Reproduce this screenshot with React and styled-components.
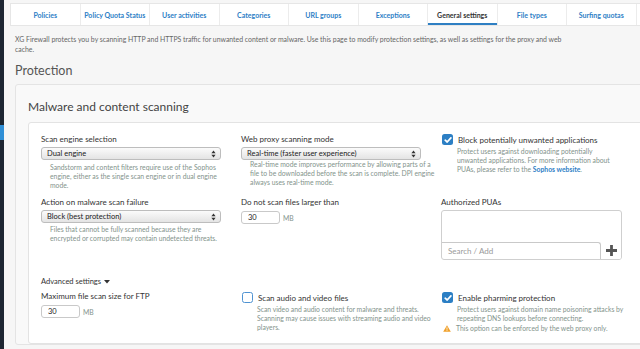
import React from 'react';
import styled, { createGlobalStyle } from 'styled-components';

const GlobalStyle = createGlobalStyle`
  html, body {
    margin: 0;
    padding: 0;
    overflow: hidden;
    background: #f6f6f6;
  }
  body {
    font-family: Lato, "Liberation Sans", Arial, sans-serif;
    color: #333;
  }
`;

const tabs = [
  'Policies',
  'Policy Quota Status',
  'User activities',
  'Categories',
  'URL groups',
  'Exceptions',
  'General settings',
  'File types',
  'Surfing quotas',
];

function Arrows() {
  return (
    <svg width="5" height="8" viewBox="0 0 5 8">
      <path d="M2.5 0.5 L4.6 3.2 H0.4 Z" fill="#333" />
      <path d="M2.5 7.5 L4.6 4.8 H0.4 Z" fill="#333" />
    </svg>
  );
}

function Check({ checked }) {
  return (
    <CheckBox $checked={checked}>
      {checked && (
        <svg width="8" height="8" viewBox="0 0 8 8">
          <path d="M1.2 4.2 L3.2 6 L6.9 1.9" stroke="#fff" strokeWidth="1.7" fill="none" strokeLinecap="round" strokeLinejoin="round" />
        </svg>
      )}
    </CheckBox>
  );
}

function SelectField({ value }) {
  return (
    <Select>
      <span>{value}</span>
      <Arrows />
    </Select>
  );
}

function App() {
  return (
    <>
      <GlobalStyle />
      <Shell>
        <Sidebar>
          <SideMarker />
        </Sidebar>
        <Main>
          <TabBar>
            {tabs.map((t) => (
              <Tab key={t} $active={t === 'General settings'}>{t}</Tab>
            ))}
          </TabBar>
          <Intro>
            XG Firewall protects you by scanning HTTP and HTTPS traffic for unwanted content or malware. Use this page to modify protection settings, as well as settings for the proxy and web cache.
          </Intro>
          <PageTitle>Protection</PageTitle>
          <Card>
            <CardTitle>Malware and content scanning</CardTitle>
            <Panel>
              <Grid>
                <Field>
                  <Label>Scan engine selection</Label>
                  <SelectField value="Dual engine" />
                  <Help $gap={3} $width={172}>
                    Sandstorm and content filters require use of the Sophos engine, either as the single scan engine or in dual engine mode.
                  </Help>
                </Field>
                <Field>
                  <Label>Web proxy scanning mode</Label>
                  <SelectField value="Real-time (faster user experience)" />
                  <Help $gap={0} $width={188}>
                    Real-time mode improves performance by allowing parts of a file to be downloaded before the scan is complete. DPI engine always uses real-time mode.
                  </Help>
                </Field>
                <Field>
                  <CheckRow>
                    <Check checked />
                    <Label>Block potentially unwanted applications</Label>
                  </CheckRow>
                  <CheckHelp $width={158}>
                    Protect users against downloading potentially unwanted applications. For more information about PUAs, please refer to the <Link>Sophos website</Link>.
                  </CheckHelp>
                </Field>

                <Field>
                  <Label>Action on malware scan failure</Label>
                  <SelectField value="Block (best protection)" />
                  <Help $gap={2} $width={172}>
                    Files that cannot be fully scanned because they are encrypted or corrupted may contain undetected threats.
                  </Help>
                </Field>
                <Field>
                  <Label>Do not scan files larger than</Label>
                  <InputRow $gap={4}>
                    <SmallInput>30</SmallInput>
                    <Unit>MB</Unit>
                  </InputRow>
                </Field>
                <Field>
                  <Label>Authorized PUAs</Label>
                  <ListBox>
                    <SearchRow>
                      <Search>Search / Add</Search>
                      <AddButton>
                        <svg width="11" height="11" viewBox="0 0 11 11">
                          <path d="M4.1 0 H6.9 V4.1 H11 V6.9 H6.9 V11 H4.1 V6.9 H0 V4.1 H4.1 Z" fill="#555" />
                        </svg>
                      </AddButton>
                    </SearchRow>
                  </ListBox>
                </Field>

                <Advanced>
                  Advanced settings
                  <svg width="6" height="4" viewBox="0 0 6 4">
                    <path d="M0 0 H6 L3 3.6 Z" fill="#333" />
                  </svg>
                </Advanced>

                <Field>
                  <Label $top={1}>Maximum file scan size for FTP</Label>
                  <InputRow $gap={4}>
                    <SmallInput>30</SmallInput>
                    <Unit>MB</Unit>
                  </InputRow>
                </Field>
                <Field>
                  <CheckRow $top={2}>
                    <Check />
                    <Label>Scan audio and video files</Label>
                  </CheckRow>
                  <CheckHelp $width={186}>
                    Scan video and audio content for malware and threats. Scanning may cause issues with streaming audio and video players.
                  </CheckHelp>
                </Field>
                <Field>
                  <CheckRow $top={2}>
                    <Check checked />
                    <Label>Enable pharming protection</Label>
                  </CheckRow>
                  <CheckHelp $width={180}>
                    Protect users against domain name poisoning attacks by repeating DNS lookups before connecting.
                    <Warning>
                      <svg width="8" height="7" viewBox="0 0 8 7">
                        <path d="M4 0.2 L7.8 6.8 H0.2 Z" fill="#f0a02a" />
                        <rect x="3.6" y="2.3" width="0.8" height="2.4" fill="#fff" />
                        <rect x="3.6" y="5.2" width="0.8" height="0.8" fill="#fff" />
                      </svg>
                      This option can be enforced by the web proxy only.
                    </Warning>
                  </CheckHelp>
                </Field>
              </Grid>
            </Panel>
          </Card>
        </Main>
      </Shell>
    </>
  );
}

const Shell = styled.div`
  display: flex;
  min-height: 360px;
  width: 640px;
  overflow: hidden;
`;

const Sidebar = styled.div`
  flex: 0 0 4px;
  background: #1d2632;
  display: flex;
  flex-direction: column;
`;

const SideMarker = styled.div`
  margin-top: 125px;
  height: 15px;
  background: #2f8fd6;
`;

const Main = styled.div`
  flex: 1;
  min-width: 0;
  padding: 3px 0 0 6px;
`;

const TabBar = styled.div`
  display: flex;
  height: 21px;
  background: #fff;
  border: 1px solid #e6e6e6;
  margin-right: -20px;
`;

const Tab = styled.div`
  flex: 0 0 69.5px;
  box-sizing: border-box;
  display: flex;
  align-items: center;
  justify-content: center;
  border-right: 1px solid #ececec;
  font-size: 7px;
  font-weight: 700;
  white-space: nowrap;
  color: ${(p) => (p.$active ? '#333' : '#2e80c6')};
  box-shadow: ${(p) => (p.$active ? 'inset 0 -2px 0 #2e7fc3' : 'none')};
`;

const Intro = styled.p`
  margin: 8px 0 0 5px;
  font-size: 6.9px;
  line-height: 10px;
  color: #666;
  max-width: 560px;
`;

const PageTitle = styled.h1`
  margin: 9px 0 0 5px;
  font-size: 12.5px;
  line-height: 16px;
  font-weight: 400;
  color: #555;
`;

const Card = styled.section`
  margin: 5px -20px 0 5px;
  padding: 14px 0 0 12px;
  background: #f9f9f9;
  border: 1px solid #e4e4e4;
  border-radius: 3px;
`;

const CardTitle = styled.h2`
  margin: 0 0 7px;
  font-size: 12px;
  line-height: 16px;
  font-weight: 400;
  color: #444;
`;

const Panel = styled.div`
  background: #fff;
  border: 1px solid #e3e3e3;
  border-radius: 3px;
  padding: 11px 0 10px 12px;
`;

const Grid = styled.div`
  display: grid;
  grid-template-columns: 200px 200px 200px;
  grid-template-rows: 63px 77px 16px auto;
`;

const Field = styled.div`
  display: flex;
  flex-direction: column;
  align-items: flex-start;
`;

const Label = styled.div`
  font-size: 8px;
  line-height: 10px;
  color: #333;
  white-space: nowrap;
  margin-top: ${(p) => p.$top || 0}px;
`;

const Select = styled.div`
  box-sizing: border-box;
  width: 180px;
  height: 13px;
  margin-top: 3px;
  padding: 0 4px 0 5px;
  display: flex;
  align-items: center;
  justify-content: space-between;
  border: 1px solid #bdbdbd;
  border-radius: 3px;
  background: linear-gradient(#fbfbfb, #e4e4e4);
  font-size: 7.5px;
  color: #222;
  white-space: nowrap;
`;

const Help = styled.p`
  margin: ${(p) => p.$gap}px 0 0 9px;
  width: ${(p) => p.$width}px;
  font-size: 6.8px;
  line-height: 9px;
  color: #83938c;
`;

const CheckRow = styled.div`
  display: flex;
  align-items: center;
  gap: 5px;
  margin-top: ${(p) => p.$top || 0}px;
`;

const CheckBox = styled.span`
  box-sizing: border-box;
  width: 11px;
  height: 11px;
  border-radius: 2.5px;
  display: flex;
  align-items: center;
  justify-content: center;
  background: ${(p) => (p.$checked ? '#2c7fc4' : '#fff')};
  border: ${(p) => (p.$checked ? 'none' : '1.3px solid #4f93d2')};
  margin-left: 1px;
`;

const CheckHelp = styled.div`
  margin: 2px 0 0 16px;
  width: ${(p) => p.$width}px;
  font-size: 6.8px;
  line-height: 9px;
  color: #83938c;
`;

const Link = styled.span`
  color: #2e80c6;
  font-weight: 700;
`;

const Warning = styled.div`
  display: flex;
  align-items: center;
  gap: 5px;
  margin-left: -14px;
  margin-top: 1px;
`;

const InputRow = styled.div`
  display: flex;
  align-items: center;
  gap: 3px;
  margin-top: ${(p) => p.$gap}px;
`;

const SmallInput = styled.div`
  box-sizing: border-box;
  width: 39px;
  height: 13px;
  padding-left: 6px;
  display: flex;
  align-items: center;
  border: 1px solid #c9c9c9;
  border-radius: 3px;
  background: #fff;
  font-size: 7.5px;
  color: #222;
`;

const Unit = styled.span`
  font-size: 6.8px;
  color: #83938c;
`;

const ListBox = styled.div`
  box-sizing: border-box;
  width: 181px;
  height: 50px;
  margin-top: 3px;
  border: 1px solid #cfcfcf;
  border-radius: 3px;
  display: flex;
  flex-direction: column;
  justify-content: flex-end;
  overflow: hidden;
`;

const SearchRow = styled.div`
  display: flex;
  height: 17px;
`;

const Search = styled.div`
  box-sizing: border-box;
  flex: 0 0 159px;
  display: flex;
  align-items: center;
  padding-left: 6px;
  border: 1px solid #c9c9c9;
  border-left: none;
  border-bottom: none;
  border-radius: 0 3px 0 0;
  font-size: 8px;
  color: #9a9a9a;
`;

const AddButton = styled.div`
  flex: 1;
  display: flex;
  align-items: center;
  justify-content: center;
  background: #fff;
`;

const Advanced = styled.div`
  grid-column: 1 / -1;
  display: flex;
  align-items: center;
  gap: 3px;
  font-size: 7.5px;
  line-height: 10px;
  color: #333;
`;

export default App;
